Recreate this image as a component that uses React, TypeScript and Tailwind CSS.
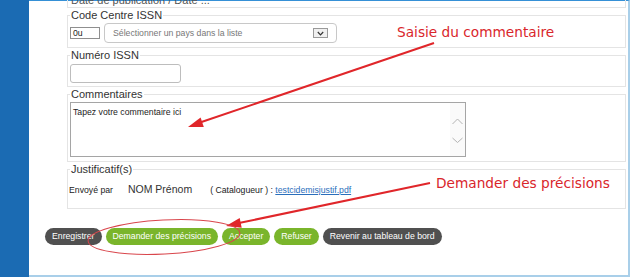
export default function App() {
  return (
    <div className="relative w-[630px] h-[277px] overflow-hidden bg-white flex font-['Liberation_Sans',Arial,sans-serif]">
      <div className="w-[29px] shrink-0 bg-[#1b6bb3]" />
      <div className="flex-1 min-w-0 flex flex-col border-t border-t-[#3590d6] border-r-2 border-r-[#a9cfe9] border-b-2 border-b-[#a9cfe9]">
        <div className="ml-[38px] mr-[2px] -mt-[7px] flex flex-col text-[#333]">
          <div className="border-x border-b border-[#e4e4e4] px-[3px] text-[11px] leading-[13px] text-[#555]">
            Date de publication / Date ...
          </div>

          <fieldset className="border border-[#e4e4e4] px-[2px] pt-[1px] pb-[4px]">
            <legend className="px-[1px] text-[11px] leading-[14px] text-[#333]">Code Centre ISSN</legend>
            <div className="flex items-center gap-[4px]">
              <div className="w-[30px] h-[12px] border border-[#8f8f8f] bg-white pl-[2px] text-[8.7px] leading-[10px] text-[#222]">
                0u
              </div>
              <div className="w-[233px] h-[20px] rounded-[4px] border border-[#c8c8c8] bg-white flex items-center justify-between pl-[8px] pr-[8px]">
                <span className="text-[8.7px] leading-[10px] text-[#777]">Sélectionner un pays dans la liste</span>
                <span className="w-[15px] h-[10px] border border-[#9a9a9a] bg-[#f0f0f0] flex items-center justify-center">
                  <svg width="7" height="5" viewBox="0 0 7 5">
                    <polyline points="0.8,1 3.5,3.8 6.2,1" fill="none" stroke="#333" strokeWidth="1.2" />
                  </svg>
                </span>
              </div>
            </div>
          </fieldset>

          <fieldset className="border border-[#e4e4e4] px-[2px] pt-[2px] pb-[3px]">
            <legend className="px-[1px] text-[11px] leading-[14px] text-[#333]">Numéro ISSN</legend>
            <div className="w-[111px] h-[19px] rounded-[3px] border border-[#bdbdbd] bg-white" />
          </fieldset>

          <fieldset className="border border-[#e4e4e4] px-[2px] pt-[1px] pb-[4px]">
            <legend className="px-[1px] text-[11px] leading-[14px] text-[#333]">Commentaires</legend>
            <div className="w-[396px] h-[55px] border border-[#a5a5a5] bg-white flex">
              <div className="flex-1 pl-[2px] pt-[4px] text-[8.7px] leading-[10px] text-[#222]">
                Tapez votre commentaire ici
              </div>
              <div className="w-[15px] bg-[#fafafa]">
                <svg width="15" height="53" viewBox="0 0 15 53">
                  <polyline points="2.5,21 7.5,16 12.5,21" fill="none" stroke="#b4b4b4" strokeWidth="1" />
                  <polyline points="2.5,35 7.5,39.5 12.5,35" fill="none" stroke="#b4b4b4" strokeWidth="1" />
                </svg>
              </div>
            </div>
          </fieldset>

          <fieldset className="border border-[#e4e4e4] px-[2px] pt-[5px] pb-[11px]">
            <legend className="px-[1px] text-[11px] leading-[14px] text-[#333]">Justificatif(s)</legend>
            <div className="h-[16px] flex items-baseline text-[#222]">
              <span className="text-[8.7px] leading-[16px] -ml-[1px]">Envoyé par</span>
              <span className="ml-[15px] text-[10.5px] leading-[16px] text-[#333]">NOM Prénom</span>
              <span className="ml-[18px] text-[8.7px] leading-[16px] whitespace-pre">( Catalogueur ) : </span>
              <span className="text-[8.7px] leading-[16px] text-[#2a6ebb] underline">testcidemisjustif.pdf</span>
            </div>
          </fieldset>
        </div>

        <div className="ml-[16px] mt-[19px] flex gap-[4px] text-[8.7px] leading-[17px] text-white">
          <span className="h-[17px] px-[7px] rounded-full bg-[#505050]">Enregistrer</span>
          <span className="h-[17px] px-[7px] rounded-full bg-[#7ab52b]">Demander des précisions</span>
          <span className="h-[17px] px-[7px] rounded-full bg-[#7ab52b]">Accepter</span>
          <span className="h-[17px] px-[7px] rounded-full bg-[#7ab52b]">Refuser</span>
          <span className="h-[17px] px-[7px] rounded-full bg-[#505050]">Revenir au tableau de bord</span>
        </div>
      </div>

      <svg className="absolute inset-0 pointer-events-none" width="630" height="277" viewBox="0 0 630 277">
        <line x1="434" y1="43" x2="200" y2="122.5" stroke="#e0262a" strokeWidth="2" />
        <polygon points="188,127 203.8,126.9 200.6,117.5" fill="#e0262a" />
        <line x1="430" y1="183" x2="239" y2="223" stroke="#e0262a" strokeWidth="2" />
        <polygon points="226,226 241.7,227.8 239.7,218" fill="#e0262a" />
        <ellipse cx="164" cy="237" rx="76" ry="17" transform="rotate(-3 164 237)" fill="none" stroke="#d9464c" strokeWidth="1" />
      </svg>

      <div className="absolute left-[397px] top-[24px] text-[13.7px] leading-[16px] text-[#d9262c] font-['DejaVu_Sans',Verdana,sans-serif] whitespace-nowrap">
        Saisie du commentaire
      </div>
      <div className="absolute left-[436px] top-[175px] text-[13.7px] leading-[16px] text-[#d9262c] font-['DejaVu_Sans',Verdana,sans-serif] whitespace-nowrap">
        Demander des précisions
      </div>
    </div>
  );
}
